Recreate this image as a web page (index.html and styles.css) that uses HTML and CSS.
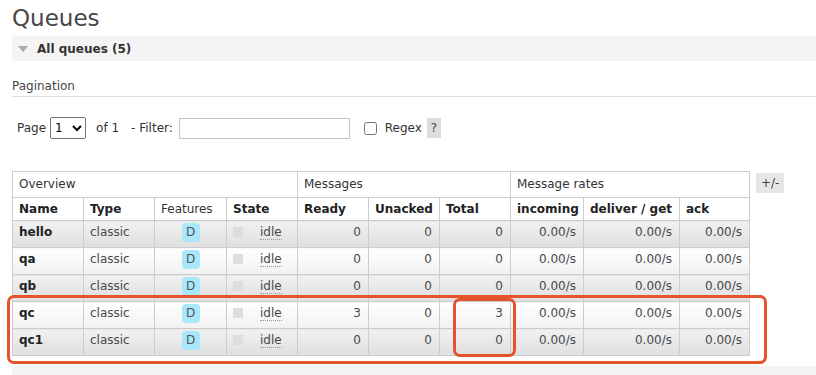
FILE: index.html
```html
<!DOCTYPE html>
<html lang="en">
<head>
    <meta charset="UTF-8">
    <meta name="viewport" content="width=device-width, initial-scale=1.0">
    <title>Queues</title>
    <link rel="stylesheet" href="styles.css">
</head>
<body>
    <h1>Queues</h1>
    <div class="section-head">
        <span class="arrow"></span>
        <span>All queues (5)</span>
    </div>

    <h3 class="pagination-title">Pagination</h3>
    <div class="filter-row">
        <label for="page">Page</label>
        <select id="page">
            <option>1</option>
        </select>
        <span class="of">of 1</span>
        <label for="filter">- Filter:</label>
        <input type="text" id="filter">
        <input type="checkbox" id="regex" class="regex-box">
        <label for="regex">Regex</label>
        <span class="help">?</span>
    </div>

    <div class="list-area">
        <div class="table-wrap">
            <table class="list">
                <colgroup>
                    <col style="width: 71px">
                    <col style="width: 71px">
                    <col style="width: 72px">
                    <col style="width: 71px">
                    <col style="width: 71px">
                    <col style="width: 71px">
                    <col style="width: 71px">
                    <col style="width: 73px">
                    <col style="width: 96px">
                    <col style="width: 70px">
                </colgroup>
                <thead>
                    <tr class="group-row">
                        <th colspan="4">Overview</th>
                        <th colspan="3">Messages</th>
                        <th colspan="3">Message rates</th>
                    </tr>
                    <tr class="col-row">
                        <th>Name</th>
                        <th>Type</th>
                        <th class="plain">Features</th>
                        <th>State</th>
                        <th>Ready</th>
                        <th>Unacked</th>
                        <th>Total</th>
                        <th>incoming</th>
                        <th>deliver / get</th>
                        <th>ack</th>
                    </tr>
                </thead>
                <tbody>
                    <tr class="alt1">
                        <td class="name">hello</td>
                        <td>classic</td>
                        <td class="center"><abbr class="feature">D</abbr></td>
                        <td><span class="state-box"></span><abbr class="state">idle</abbr></td>
                        <td class="r">0</td>
                        <td class="r">0</td>
                        <td class="r">0</td>
                        <td class="r">0.00/s</td>
                        <td class="r">0.00/s</td>
                        <td class="r">0.00/s</td>
                    </tr>
                    <tr class="alt2">
                        <td class="name">qa</td>
                        <td>classic</td>
                        <td class="center"><abbr class="feature">D</abbr></td>
                        <td><span class="state-box"></span><abbr class="state">idle</abbr></td>
                        <td class="r">0</td>
                        <td class="r">0</td>
                        <td class="r">0</td>
                        <td class="r">0.00/s</td>
                        <td class="r">0.00/s</td>
                        <td class="r">0.00/s</td>
                    </tr>
                    <tr class="alt1">
                        <td class="name">qb</td>
                        <td>classic</td>
                        <td class="center"><abbr class="feature">D</abbr></td>
                        <td><span class="state-box"></span><abbr class="state">idle</abbr></td>
                        <td class="r">0</td>
                        <td class="r">0</td>
                        <td class="r">0</td>
                        <td class="r">0.00/s</td>
                        <td class="r">0.00/s</td>
                        <td class="r">0.00/s</td>
                    </tr>
                    <tr class="alt2">
                        <td class="name">qc</td>
                        <td>classic</td>
                        <td class="center"><abbr class="feature">D</abbr></td>
                        <td><span class="state-box"></span><abbr class="state">idle</abbr></td>
                        <td class="r">3</td>
                        <td class="r">0</td>
                        <td class="r">3</td>
                        <td class="r">0.00/s</td>
                        <td class="r">0.00/s</td>
                        <td class="r">0.00/s</td>
                    </tr>
                    <tr class="alt1">
                        <td class="name">qc1</td>
                        <td>classic</td>
                        <td class="center"><abbr class="feature">D</abbr></td>
                        <td><span class="state-box"></span><abbr class="state">idle</abbr></td>
                        <td class="r">0</td>
                        <td class="r">0</td>
                        <td class="r">0</td>
                        <td class="r">0.00/s</td>
                        <td class="r">0.00/s</td>
                        <td class="r">0.00/s</td>
                    </tr>
                </tbody>
            </table>
            <!-- annotation marks drawn over the table -->
            <div class="mark mark-rows"></div>
            <div class="mark mark-total"></div>
        </div>
        <span class="plus-minus">+/-</span>
    </div>

    <div class="section-head next"></div>
</body>
</html>
```

FILE: styles.css
```css
body {
    margin: 0;
    padding: 0 0 0 12px;
    font-family: "DejaVu Sans", Verdana, sans-serif;
    font-size: 12px;
    color: #484848;
    background: #fff;
    overflow: hidden;
}
h1 {
    margin: 0;
    padding-top: 4px;
    font-size: 23px;
    font-weight: normal;
    line-height: 28px;
    color: #484848;
}
.section-head {
    margin-top: 4px;
    height: 25px;
    background: #f4f4f4;
    display: flex;
    align-items: center;
    gap: 9px;
    padding-left: 6px;
    font-weight: bold;
    color: #333;
}
.arrow {
    width: 0;
    height: 0;
    border-left: 5px solid transparent;
    border-right: 5px solid transparent;
    border-top: 6px solid #aaa;
}
.pagination-title {
    margin: 18px 0 0;
    font-size: 12px;
    font-weight: normal;
    line-height: 15px;
    padding-bottom: 2px;
    border-bottom: 1px solid #ddd;
    color: #444;
}
.filter-row {
    margin-top: 19px;
    padding-left: 5px;
    display: flex;
    align-items: center;
    height: 24px;
    color: #333;
}
.filter-row select {
    margin: 0 10px 0 4px;
    width: 36px;
    height: 22px;
    font-family: inherit;
    font-size: 12px;
}
.filter-row .of {
    margin-right: 12px;
}
#filter {
    margin: 0 0 0 6px;
    width: 171px;
    height: 21px;
    box-sizing: border-box;
    border: 1px solid #c4c4c4;
    padding: 2px 4px;
}
.regex-box {
    margin: 0 8px 0 14px;
    width: 13px;
    height: 13px;
}
.help {
    margin-left: 5px;
    width: 14px;
    height: 20px;
    line-height: 20px;
    text-align: center;
    background: #ddd;
    color: #444;
}
.list-area {
    margin-top: 31px;
    display: flex;
    align-items: flex-start;
    gap: 6px;
}
.table-wrap {
    position: relative;
}
table.list {
    border-collapse: collapse;
    table-layout: fixed;
    width: 738px;
}
table.list th, table.list td {
    border: 1px solid #ccc;
    padding: 0 6px;
    text-align: left;
    vertical-align: top;
    white-space: nowrap;
    overflow: hidden;
}
table.list .group-row th {
    height: 25px;
    line-height: 25px;
    font-weight: normal;
    color: #333;
    background: #fff;
}
table.list .col-row th {
    height: 22px;
    line-height: 22px;
    font-weight: bold;
    color: #222;
    background: #fff;
}
table.list .col-row th.plain {
    font-weight: normal;
    color: #333;
}
table.list tbody td {
    height: 27px;
    box-sizing: border-box;
    padding-top: 3px;
    line-height: 16px;
}
tr.alt1 td {
    background: linear-gradient(#f1f1f1, #dfdfdf);
}
tr.alt2 td {
    background: linear-gradient(#fff, #f1f1f1);
}
table.list td.name {
    font-weight: bold;
    color: #222;
}
table.list td.r {
    text-align: right;
    padding-right: 7px;
}
table.list td.center {
    text-align: center;
}
.feature {
    display: inline-block;
    margin-top: -1px;
    padding: 2px 0;
    width: 18px;
    line-height: 15px;
    border-radius: 4px;
    background: #a9e8fb;
    color: #555;
    text-decoration: none;
}
.state-box {
    display: inline-block;
    width: 10px;
    height: 10px;
    margin-top: 3px;
    vertical-align: top;
    background: #ddd;
}
.state {
    margin-left: 17px;
    text-decoration: none;
    border-bottom: 1px dotted #999;
}
.plus-minus {
    margin-top: 2px;
    padding: 0 5px;
    height: 20px;
    line-height: 20px;
    background: #e6e6e6;
    color: #444;
}
.mark {
    position: absolute;
    border: 3px solid #e4532a;
    border-radius: 7px;
    box-sizing: border-box;
}
.mark-rows {
    left: -5px;
    top: 124px;
    width: 760px;
    height: 69px;
}
.mark-total {
    left: 441px;
    top: 127px;
    width: 63px;
    height: 59px;
}
.section-head.next {
    margin-top: 10px;
}
```
